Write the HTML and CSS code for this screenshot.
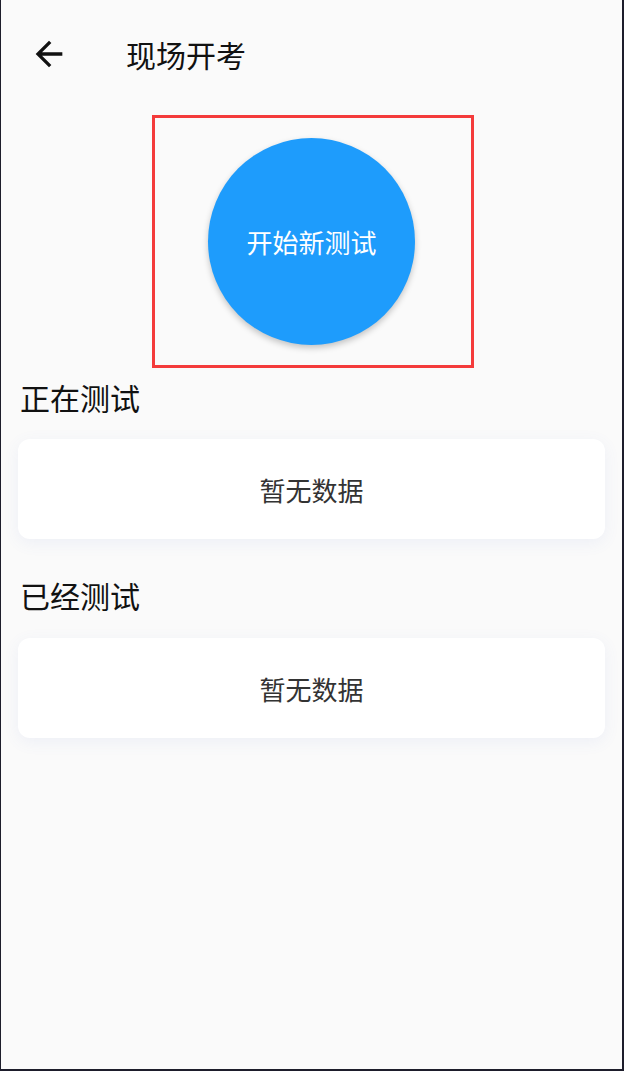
FILE: index.html
```html
<!DOCTYPE html>
<html lang="zh-CN">
<head>
    <meta charset="UTF-8">
    <meta name="viewport" content="width=device-width, initial-scale=1.0">
    <title>现场开考</title>
    <link rel="stylesheet" href="styles.css">
</head>
<body>
    <div class="page">
        <div class="header">
            <button class="back-btn" aria-label="返回">
                <svg viewBox="0 0 24 24" width="40" height="40">
                    <path d="M20 11H7.83l5.59-5.59L12 4l-8 8 8 8 1.41-1.41L7.83 13H20v-2z" fill="#111"/>
                </svg>
            </button>
            <h1 class="title">现场开考</h1>
        </div>

        <div class="start-box">
            <button class="start-btn">开始新测试</button>
        </div>

        <h2 class="section-title first">正在测试</h2>
        <div class="card">暂无数据</div>

        <h2 class="section-title">已经测试</h2>
        <div class="card">暂无数据</div>
    </div>
</body>
</html>
```

FILE: styles.css
```css
html, body {
    margin: 0;
    padding: 0;
}

body {
    font-family: "Noto Sans CJK SC", "Noto Sans", sans-serif;
    background-color: #1d1d2b;
}

.page {
    box-sizing: border-box;
    height: 1071px;
    background-color: #fafafa;
    border-left: 1px solid #1d1d2b;
    border-right: 2px solid #1d1d2b;
    border-bottom: 2px solid #1d1d2b;
}

.header {
    height: 108px;
    display: flex;
    align-items: center;
    padding-left: 28px;
}

.back-btn {
    width: 40px;
    height: 40px;
    padding: 0;
    border: none;
    background: none;
    display: flex;
    cursor: pointer;
}

.title {
    margin: 0 0 0 57px;
    font-size: 30px;
    font-weight: 400;
    color: #111;
}

.start-box {
    box-sizing: border-box;
    width: 322px;
    margin: 7px 0 0 151px;
    padding: 20px 0 20px 53px;
    border: 3px solid #f43b3b;
    display: flex;
}

.start-btn {
    width: 207px;
    height: 207px;
    border-radius: 50%;
    border: none;
    background-color: #1e9cfc;
    color: #fff;
    font-family: inherit;
    font-size: 26px;
    box-shadow: 0 3px 6px rgba(0, 0, 0, 0.22);
    cursor: pointer;
}

.section-title {
    margin: 36px 0 23px;
    padding-left: 19px;
    font-size: 30px;
    line-height: 40px;
    font-weight: 400;
    color: #111;
}

.section-title.first {
    margin-top: 9px;
    margin-bottom: 22px;
}

.card {
    height: 100px;
    margin: 0 17px;
    background-color: #fff;
    border-radius: 12px;
    box-shadow: 0 4px 16px rgba(90, 110, 200, 0.08);
    display: flex;
    align-items: center;
    justify-content: center;
    font-size: 26px;
    color: #333;
}
```
